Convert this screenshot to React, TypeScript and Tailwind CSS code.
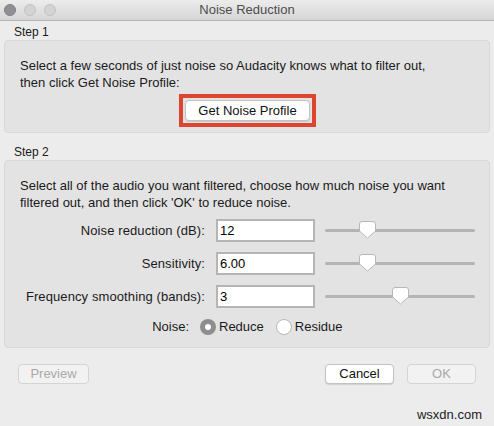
import React from "react";

const font = { fontFamily: '"Liberation Sans", Arial, sans-serif' };

function TrafficLights() {
  return (
    <div className="flex items-center gap-[8px] pl-[4px]">
      <div className="w-[12px] h-[12px] rounded-full bg-[#8f8f94] border border-[#7f7f84]" />
      <div className="w-[12px] h-[12px] rounded-full bg-[#d3d3d3] border border-[#c3c3c3]" />
      <div className="w-[12px] h-[12px] rounded-full bg-[#d3d3d3] border border-[#c3c3c3]" />
    </div>
  );
}

function Thumb() {
  return (
    <svg width="17" height="18" viewBox="0 0 17 18">
      <path
        d="M3 0.5 H14 A2.5 2.5 0 0 1 16.5 3 V10 L8.5 17 L0.5 10 V3 A2.5 2.5 0 0 1 3 0.5 Z"
        fill="#ffffff"
        stroke="#b8b8b8"
        strokeWidth="1"
      />
    </svg>
  );
}

function Slider({ at }: { at: number }) {
  return (
    <div className="relative w-[150px] h-[23px] flex items-center">
      <div className="w-full h-[3px] rounded-full bg-[#b4b4b4]" />
      <div className="absolute top-[2px]" style={{ left: at }}>
        <Thumb />
      </div>
    </div>
  );
}

function Row({ label, value, at }: { label: string; value: string; at: number }) {
  return (
    <div className="flex items-center h-[23px]">
      <div className="w-[200px] text-right text-[13px] tracking-[0.1px] text-[#1a1a1a]">{label}</div>
      <div className="ml-[11px] w-[99px] h-[23px] bg-white border-2 border-[#b5b5b5] flex items-center pl-[2px] text-[13px] text-black">
        {value}
      </div>
      <div className="ml-[10px]">
        <Slider at={at} />
      </div>
    </div>
  );
}

function Button({ label, disabled, w }: { label: string; disabled?: boolean; w: string }) {
  return (
    <div
      className={
        disabled
          ? `${w} h-[20px] rounded-[4px] border border-[#d4d4d4] bg-[#f2f2f2] flex items-center justify-center text-[13px] text-[#a9a9a9]`
          : `${w} h-[20px] rounded-[4px] border border-[#c2c2c2] bg-white shadow-[0_1px_1px_rgba(0,0,0,0.12)] flex items-center justify-center text-[13px] text-[#111]`
      }
    >
      {label}
    </div>
  );
}

export default function App() {
  return (
    <div className="w-[494px] h-[426px] bg-[#ececec] flex flex-col overflow-hidden" style={font}>
      {/* title bar */}
      <div className="h-[21px] grid grid-cols-[1fr_auto_1fr] items-center bg-gradient-to-b from-[#ececec] to-[#d6d6d6] border-b border-[#b6b6b6]">
        <TrafficLights />
        <div className="text-[13px] text-[#4d4d4d]">Noise Reduction</div>
        <div />
      </div>

      <div className="h-[19px] flex items-end pl-[14px] text-[12px] text-[#1a1a1a] leading-[14px] pb-[1px]">Step 1</div>
      <div className="mx-[4px] h-[93px] rounded-[4px] bg-[#e3e3e3] border border-[#d9d9d9] flex flex-col">
        <div className="pl-[15px] pt-[17px] text-[13px] leading-[16.5px] text-[#1a1a1a]">
          Select a few seconds of just noise so Audacity knows what to filter out,
          <br />
          then click Get Noise Profile:
        </div>
        <div className="flex justify-center mt-[3px]">
          <div className="ml-[1px] border-4 border-[#dc4530] p-[2px]">
            <Button label="Get Noise Profile" w="w-[125px] h-[21px]" />
          </div>
        </div>
      </div>

      <div className="h-[27px] flex items-end pl-[14px] text-[12px] text-[#1a1a1a] leading-[14px] pb-[1px]">Step 2</div>
      <div className="mx-[4px] h-[188px] rounded-[4px] bg-[#e3e3e3] border border-[#d9d9d9] flex flex-col">
        <div className="pl-[15px] pt-[17px] text-[13px] leading-[16.5px] text-[#1a1a1a]">
          Select all of the audio you want filtered, choose how much noise you want
          <br />
          filtered out, and then click 'OK' to reduce noise.
        </div>
        <div className="mt-[8px] flex flex-col gap-[10px]">
          <Row label="Noise reduction (dB):" value="12" at={34} />
          <Row label="Sensitivity:" value="6.00" at={34} />
          <Row label="Frequency smoothing (bands):" value="3" at={67} />
        </div>
        <div className="mt-[11px] flex items-center h-[16px] text-[13px] text-[#1a1a1a]">
          <div className="w-[184px] text-right">Noise:</div>
          <div className="ml-[11px] w-[16px] h-[16px] rounded-full bg-[#8e8e8e] flex items-center justify-center">
            <div className="w-[6px] h-[6px] rounded-full bg-white" />
          </div>
          <div className="ml-[3px]">Reduce</div>
          <div className="ml-[12px] w-[16px] h-[16px] rounded-full bg-white border border-[#b8b8b8]" />
          <div className="ml-[3px]">Residue</div>
        </div>
      </div>

      <div className="mt-[16px] flex items-center px-[18px]">
        <Button label="Preview" disabled w="w-[71px]" />
        <div className="flex-1" />
        <Button label="Cancel" w="w-[69px]" />
        <div className="ml-[13px]">
          <Button label="OK" disabled w="w-[69px]" />
        </div>
      </div>

      <div className="flex-1 flex items-end justify-end pr-[12px] pb-[2px] text-[13px] text-[#222]">wsxdn.com</div>
    </div>
  );
}
